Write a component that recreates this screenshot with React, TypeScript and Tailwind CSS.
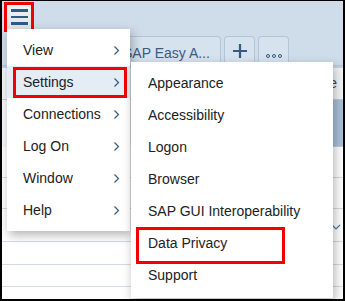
import React from 'react';

const mainItems = ['View', 'Settings', 'Connections', 'Log On', 'Window', 'Help'];
const subItems = [
  'Appearance',
  'Accessibility',
  'Logon',
  'Browser',
  'SAP GUI Interoperability',
  'Data Privacy',
  'Support',
];

function Chevron() {
  return (
    <svg width="7" height="11" viewBox="0 0 7 11" className="shrink-0">
      <polyline points="1.5,1.5 5.5,5.5 1.5,9.5" fill="none" stroke="#35597f" strokeWidth="1.2" />
    </svg>
  );
}

export default function App() {
  return (
    <div
      className="relative w-[345px] h-[301px] overflow-hidden bg-white border-t border-x-2 border-b-2 border-black text-[14px] text-[#222]"
      style={{ fontFamily: '"Liberation Sans", Arial, sans-serif' }}
    >
      {/* Shell header */}
      <div className="relative h-[65px] bg-[#cfdcea] border-b border-[#b9c9d9]">
        {/* Hamburger */}
        <div className="absolute left-[2px] top-[1px] w-[30px] h-[30px] border-[3px] border-[#f20000] bg-gradient-to-b from-[#f1f3f5] to-[#dfe4e9] flex flex-col items-center justify-center gap-[4px]">
          <div className="w-[17px] h-[2.5px] bg-[#2f5b87]" />
          <div className="w-[17px] h-[2.5px] bg-[#2f5b87]" />
          <div className="w-[17px] h-[2.5px] bg-[#2f5b87]" />
        </div>

        {/* Tabs */}
        <div className="absolute left-[108px] top-[35px] flex gap-[3px]">
          <div className="w-[111px] h-[29px] rounded-t-[4px] border border-b-0 border-[#b3c5d8] bg-[#d6e2ee] pl-[12px] pt-[6px] text-[#3a5c80] whitespace-nowrap">
            SAP Easy A...
          </div>
          <div className="w-[31px] h-[29px] rounded-t-[4px] border border-b-0 border-[#b3c5d8] bg-[#d6e2ee] flex items-center justify-center">
            <svg width="14" height="14" viewBox="0 0 14 14">
              <path d="M7 0v14M0 7h14" stroke="#35597f" strokeWidth="2.2" />
            </svg>
          </div>
          <div className="w-[31px] h-[29px] rounded-t-[4px] border border-b-0 border-[#b3c5d8] bg-[#d6e2ee] flex items-end justify-center pb-[7px] gap-[2px]">
            <div className="w-[4px] h-[4px] rounded-full border border-[#35597f]" />
            <div className="w-[4px] h-[4px] rounded-full border border-[#35597f]" />
            <div className="w-[4px] h-[4px] rounded-full border border-[#35597f]" />
          </div>
        </div>
      </div>

      {/* Content behind */}
      <div className="flex flex-col">
        <div className="h-[2px] bg-[#c9d3dc]" />
        <div className="h-[32px] bg-[#f3f5f7] border-b border-[#c4ccd4] flex justify-end items-center pr-[6px] text-[#444]">
          Favorite
        </div>
        <div className="h-[47px] flex">
          <div className="w-[160px] bg-[#f7f8fa]" />
          <div className="flex-1 bg-[#aac2db] border-b border-[#c4ccd4]" />
        </div>
        <div className="h-[31px] border-b border-[#d5dbe1]" />
        <div className="h-[31px] border-b border-[#d5dbe1]" />
        <div className="h-[33px] border-b border-[#d5dbe1] flex justify-end items-end pr-[2px] pb-[11px]">
          <svg width="10" height="6" viewBox="0 0 10 6">
            <polyline points="1,1 5,5 9,1" fill="none" stroke="#4a7bab" strokeWidth="1.2" />
          </svg>
        </div>
        <div className="h-[23px] border-b border-[#d5dbe1]" />
        <div className="h-[22px] border-b border-[#d5dbe1]" />
      </div>

      {/* Main menu */}
      <div className="absolute left-[5px] top-[28px] w-[123px] bg-white py-[5px] shadow-[2px_4px_10px_rgba(0,0,0,0.3)]">
        {mainItems.map((item) => (
          <div
            key={item}
            className={`h-[32px] flex items-center justify-between pl-[16px] pr-[10px] ${
              item === 'Settings' ? 'bg-[#e4ecf5]' : ''
            }`}
          >
            <span>{item}</span>
            <Chevron />
          </div>
        ))}
        <div className="absolute left-[6px] top-[38px] w-[114px] h-[31px] border-[3px] border-[#f20000]" />
      </div>

      {/* Settings submenu */}
      <div className="absolute left-[129px] top-[61px] w-[202px] bg-white pt-[5px] pb-[7px] shadow-[2px_4px_10px_rgba(0,0,0,0.3)]">
        {subItems.map((item) => (
          <div key={item} className="h-[32px] flex items-center pl-[17px] whitespace-nowrap">
            {item}
          </div>
        ))}
        <div className="absolute left-[5px] top-[165px] w-[149px] h-[37px] border-[3px] border-[#f20000]" />
      </div>
    </div>
  );
}
